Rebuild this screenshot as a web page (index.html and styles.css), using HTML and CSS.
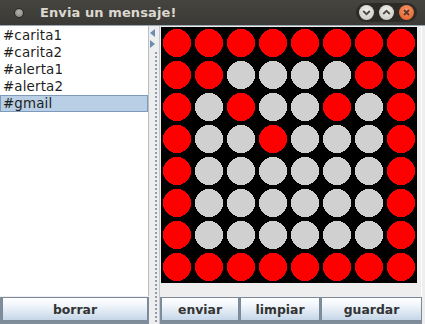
FILE: index.html
```html
<!DOCTYPE html>
<html lang="es">
<head>
<meta charset="utf-8">
<title>Envia un mensaje!</title>
<link rel="stylesheet" href="styles.css">
</head>
<body>
<div class="window">
  <header class="titlebar">
    <span class="app-dot"></span>
    <span class="title">Envia un mensaje!</span>
    <div class="wm-buttons">
      <span class="wm wm-light"><svg width="15" height="15" viewBox="0 0 15 15"><path d="M4.2 6 L7.5 9.2 L10.8 6" fill="none" stroke="#4a4945" stroke-width="1.8"/></svg></span>
      <span class="wm wm-light"><svg width="15" height="15" viewBox="0 0 15 15"><path d="M4.2 9 L7.5 5.8 L10.8 9" fill="none" stroke="#4a4945" stroke-width="1.8"/></svg></span>
      <span class="wm wm-close"><svg width="15" height="15" viewBox="0 0 15 15"><path d="M5 5 L10 10 M10 5 L5 10" fill="none" stroke="#5a3a2a" stroke-width="1.8"/></svg></span>
    </div>
  </header>
  <main class="content">
    <section class="left">
      <ul class="list">
        <li class="item">#carita1</li>
        <li class="item">#carita2</li>
        <li class="item">#alerta1</li>
        <li class="item">#alerta2</li>
        <li class="item selected">#gmail</li>
      </ul>
      <div class="btnbar btnbar-left">
        <button class="btn btn-borrar">borrar</button>
      </div>
    </section>
    <div class="divider">
      <svg class="arrow" width="6" height="8" viewBox="0 0 6 8"><path d="M5 0 L0 4 L5 8 Z" fill="#6d8bb0"/></svg>
      <svg class="arrow" width="6" height="8" viewBox="0 0 6 8"><path d="M0 0 L5 4 L0 8 Z" fill="#6d8bb0"/></svg>
      <div class="dots"></div>
    </div>
    <section class="right">
      <div class="board-area">
        <svg class="board" width="256" height="256" viewBox="0 0 256 256" shape-rendering="crispEdges">
          <rect width="256" height="256" fill="#000"/>
          <g fill="#ff0000">
            <circle cx="16" cy="16" r="14"/><circle cx="48" cy="16" r="14"/><circle cx="80" cy="16" r="14"/><circle cx="112" cy="16" r="14"/><circle cx="144" cy="16" r="14"/><circle cx="176" cy="16" r="14"/><circle cx="208" cy="16" r="14"/><circle cx="240" cy="16" r="14"/>
            <circle cx="16" cy="48" r="14"/><circle cx="48" cy="48" r="14"/><circle cx="208" cy="48" r="14"/><circle cx="240" cy="48" r="14"/>
            <circle cx="16" cy="80" r="14"/><circle cx="80" cy="80" r="14"/><circle cx="176" cy="80" r="14"/><circle cx="240" cy="80" r="14"/>
            <circle cx="16" cy="112" r="14"/><circle cx="112" cy="112" r="14"/><circle cx="240" cy="112" r="14"/>
            <circle cx="16" cy="144" r="14"/><circle cx="240" cy="144" r="14"/>
            <circle cx="16" cy="176" r="14"/><circle cx="240" cy="176" r="14"/>
            <circle cx="16" cy="208" r="14"/><circle cx="240" cy="208" r="14"/>
            <circle cx="16" cy="240" r="14"/><circle cx="48" cy="240" r="14"/><circle cx="80" cy="240" r="14"/><circle cx="112" cy="240" r="14"/><circle cx="144" cy="240" r="14"/><circle cx="176" cy="240" r="14"/><circle cx="208" cy="240" r="14"/><circle cx="240" cy="240" r="14"/>
          </g>
          <g fill="#d0d0d0">
            <circle cx="80" cy="48" r="14"/><circle cx="112" cy="48" r="14"/><circle cx="144" cy="48" r="14"/><circle cx="176" cy="48" r="14"/>
            <circle cx="48" cy="80" r="14"/><circle cx="112" cy="80" r="14"/><circle cx="144" cy="80" r="14"/><circle cx="208" cy="80" r="14"/>
            <circle cx="48" cy="112" r="14"/><circle cx="80" cy="112" r="14"/><circle cx="144" cy="112" r="14"/><circle cx="176" cy="112" r="14"/><circle cx="208" cy="112" r="14"/>
            <circle cx="48" cy="144" r="14"/><circle cx="80" cy="144" r="14"/><circle cx="112" cy="144" r="14"/><circle cx="144" cy="144" r="14"/><circle cx="176" cy="144" r="14"/><circle cx="208" cy="144" r="14"/>
            <circle cx="48" cy="176" r="14"/><circle cx="80" cy="176" r="14"/><circle cx="112" cy="176" r="14"/><circle cx="144" cy="176" r="14"/><circle cx="176" cy="176" r="14"/><circle cx="208" cy="176" r="14"/>
            <circle cx="48" cy="208" r="14"/><circle cx="80" cy="208" r="14"/><circle cx="112" cy="208" r="14"/><circle cx="144" cy="208" r="14"/><circle cx="176" cy="208" r="14"/><circle cx="208" cy="208" r="14"/>
          </g>
        </svg>
      </div>
      <div class="btnbar btnbar-right">
        <button class="btn btn-enviar">enviar</button>
        <button class="btn btn-limpiar">limpiar</button>
        <button class="btn btn-guardar">guardar</button>
      </div>
    </section>
  </main>
</div>
</body>
</html>
```

FILE: styles.css
```css
* { box-sizing: border-box; }

html, body {
  margin: 0;
  padding: 0;
}

body {
  width: 425px;
  height: 324px;
  overflow: hidden;
  background: #7f8d9b;
  font-family: "DejaVu Sans", sans-serif;
}

.window {
  display: flex;
  flex-direction: column;
  width: 425px;
  height: 324px;
}

.titlebar {
  height: 25px;
  flex: none;
  display: flex;
  align-items: center;
  background: linear-gradient(#45443f, #3b3a36);
  padding-left: 14px;
  padding-right: 8px;
}

.app-dot {
  width: 10px;
  height: 10px;
  border-radius: 50%;
  background: radial-gradient(circle at 50% 40%, #b5b3ad, #7d7b75);
  border: 1px solid #2a2926;
  margin-right: 16px;
}

.title {
  color: #dcd8cf;
  font-weight: bold;
  font-size: 13px;
  letter-spacing: 0.1px;
  flex: 1;
}

.wm-buttons {
  display: flex;
  gap: 5px;
  padding: 2px 3px;
  border-radius: 10px;
  background: #2c2b28;
}

.wm {
  width: 15px;
  height: 15px;
  border-radius: 50%;
  display: flex;
}

.wm-light {
  background: radial-gradient(circle at 50% 35%, #f1f0ec, #c4c2bb);
}

.wm-close {
  background: radial-gradient(circle at 50% 35%, #f79a6a, #e2561f);
}

.content {
  flex: 1;
  display: flex;
  background: #eeeeee;
  padding-right: 3px;
  border-top: 1px solid #9aa8b6;
}

.left {
  width: 149px;
  display: flex;
  flex-direction: column;
}

.list {
  flex: 1;
  margin: 0;
  padding: 1px 0 0;
  list-style: none;
  background: #ffffff;
  border-right: 1px solid #b7bec6;
}

.item {
  height: 17px;
  line-height: 17px;
  padding-left: 3px;
  font-size: 13.4px;
  letter-spacing: 0.15px;
  color: #1e1e1e;
}

.item.selected {
  background: #b8cfe5;
  outline: 1px solid #7f9bbb;
  outline-offset: -1px;
}

.btnbar {
  height: 28px;
  flex: none;
  display: flex;
  padding: 0 0 3px;
  background: #7f8d9b;
  border-top: 1px solid #eeeeee;
}

.btnbar-left {
  padding-left: 2px;
  padding-right: 1px;
}

.btnbar-right {
  padding-left: 1px;
  gap: 1px;
}

.btn {
  height: 24px;
  margin: 0;
  padding: 0;
  border: 1px solid #7a8a99;
  background: linear-gradient(#ffffff 0%, #f3f7fb 30%, #dce7f2 65%, #c5d6e8 100%);
  font-family: "DejaVu Sans", sans-serif;
  font-weight: bold;
  font-size: 12.4px;
  color: #333333;
}

.btn-borrar { flex: 1; }
.btn-enviar { width: 78px; }
.btn-limpiar { width: 80px; }
.btn-guardar { flex: 1; }

.divider {
  width: 11px;
  flex: none;
  display: flex;
  flex-direction: column;
  align-items: center;
  padding-top: 3px;
  gap: 3px;
  background: #eeeeee;
  border-right: 1px solid #c3c9cf;
}

.arrow { flex: none; margin-left: -2px; }

.dots {
  flex: 1;
  width: 4px;
  margin-left: 3px;
  background-image: radial-gradient(circle, #8c9cae 0.8px, transparent 1px);
  background-size: 4px 4px;
}

.right {
  flex: 1;
  display: flex;
  flex-direction: column;
}

.board-area {
  flex: 1;
  padding: 1px 0 0 1px;
  border-right: 1px solid #ffffff;
}

.board {
  display: block;
}
```
